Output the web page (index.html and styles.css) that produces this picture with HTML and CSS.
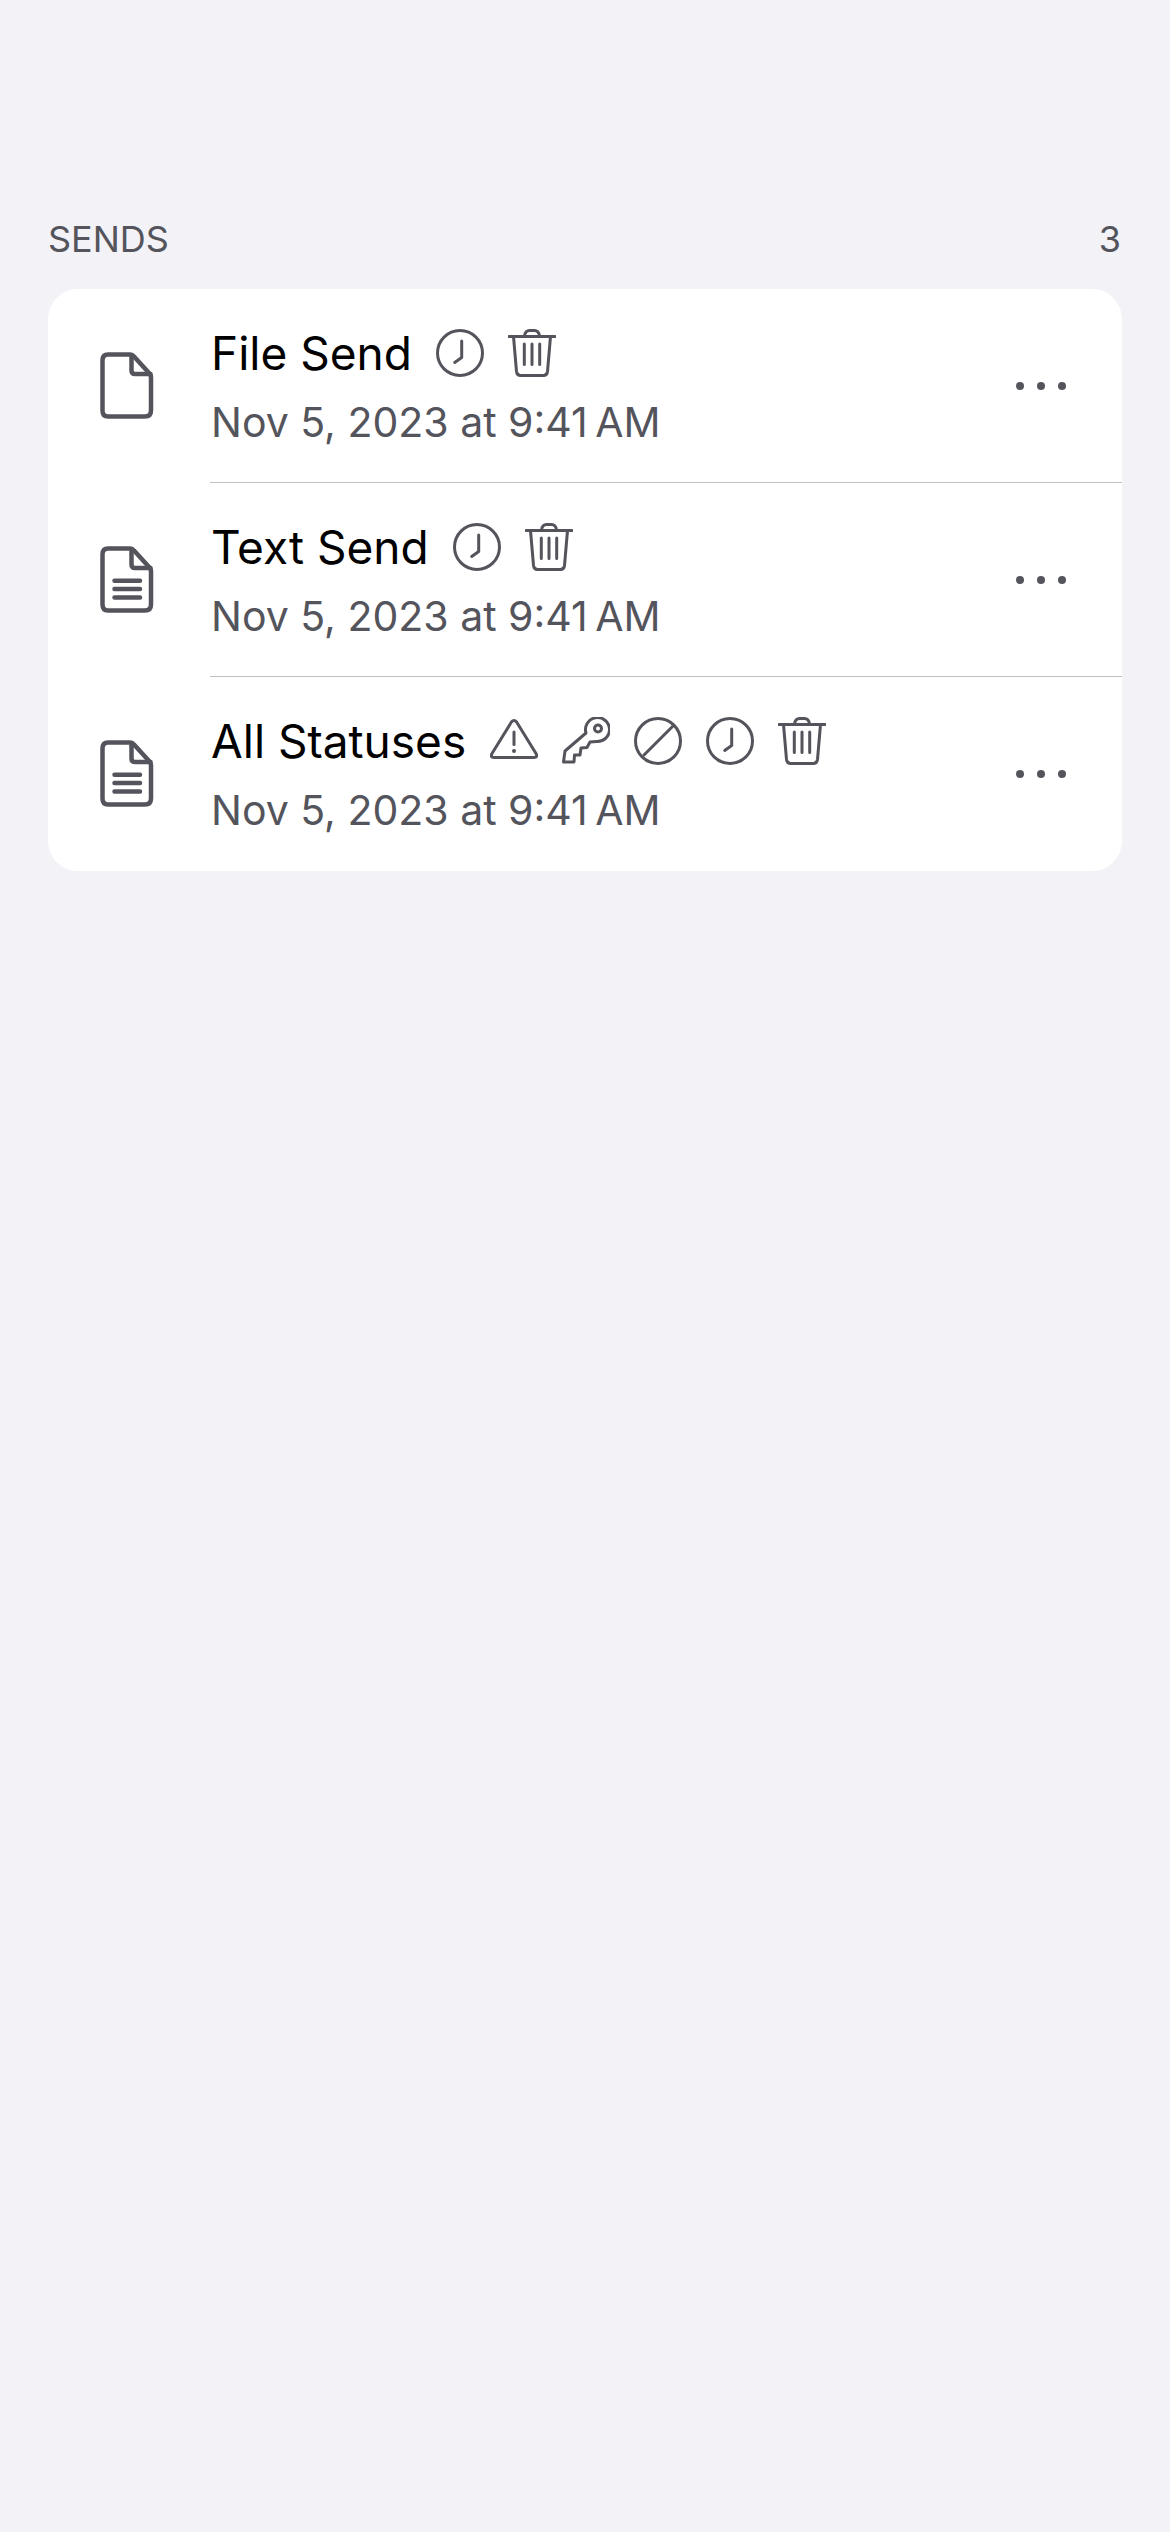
FILE: index.html
```html
<!DOCTYPE html>
<html lang="en">
<head>
<meta charset="utf-8">
<title>Sends</title>
<link rel="stylesheet" href="styles.css">
</head>
<body>
<svg class="defs" width="0" height="0" aria-hidden="true">
  <defs>
    <symbol id="i-clock" viewBox="0 0 48 48"><circle cx="24" cy="24" r="22.5"/><path d="M25.7 12V28.5L18.7 33.5"/></symbol>
    <symbol id="i-trash" viewBox="0 0 48 48"><path d="M1 7.5H47"/><path d="M16.5 7C17 3.5 19 1.5 21.5 1.5H26.5C29 1.5 31 3.5 31.5 7"/><path d="M5.5 7.5L8.5 42.5Q9 46.5 12.5 46.5H35.5Q39 46.5 39.5 42.5L42.5 7.5"/><path d="M16.3 15V35.5M24 15V35.5M31.7 15V35.5"/></symbol>
    <symbol id="i-warn" viewBox="0 0 48 48"><path d="M21.4 5Q24 1.8 26.6 5L46 36.5Q48 40.5 44 40.5H4Q0 40.5 2 36.5Z"/><path d="M24 15V27.5"/><circle class="solid" cx="24" cy="34" r="2"/></symbol>
    <symbol id="i-key" viewBox="0 0 48 48"><path d="M24 16A12 12 0 1 1 34.5 24.5L28 25L25 30.5L19 31L18 38L12.5 38L12 45H1.5L3 34Z"/><circle cx="36" cy="11.5" r="3.5"/></symbol>
    <symbol id="i-ban" viewBox="0 0 48 48"><circle cx="24" cy="24" r="22.5"/><path d="M39 9L10 38"/></symbol>
    <symbol id="i-file" viewBox="0 1 60 72"><path d="M11 5.5H33Q35.5 5.5 37 7.5L52.5 24.5Q54 26.3 54 28.5V61.5Q54 67.5 48 67.5H11Q5.5 67.5 5.5 61.5V11.5Q5.5 5.5 11 5.5Z"/><path d="M34.5 6V21.5Q34.5 25 38 25H53.5"/></symbol>
    <symbol id="i-text" viewBox="0 1 60 72"><path d="M11 5.5H33Q35.5 5.5 37 7.5L52.5 24.5Q54 26.3 54 28.5V61.5Q54 67.5 48 67.5H11Q5.5 67.5 5.5 61.5V11.5Q5.5 5.5 11 5.5Z"/><path d="M34.5 6V21.5Q34.5 25 38 25H53.5"/><path d="M17.5 37.7H43M17.5 46H43M17.5 54.5H43"/></symbol>
  </defs>
</svg>
<main class="page">
  <header class="section-head">
    <span>SENDS</span>
    <span>3</span>
  </header>
  <section class="card">
    <article class="row">
      <svg class="type-icon"><use href="#i-file"/></svg>
      <div class="row-body">
        <div class="row-text">
          <div class="title-line">
            <span class="title">File Send</span>
            <span class="status">
              <svg class="status-icon"><use href="#i-clock"/></svg>
              <svg class="status-icon"><use href="#i-trash"/></svg>
            </span>
          </div>
          <div class="date">Nov 5, 2023 at 9:41&#8239;AM</div>
        </div>
        <div class="more"><i></i><i></i><i></i></div>
      </div>
    </article>
    <article class="row">
      <svg class="type-icon"><use href="#i-text"/></svg>
      <div class="row-body">
        <div class="row-text">
          <div class="title-line">
            <span class="title">Text Send</span>
            <span class="status">
              <svg class="status-icon"><use href="#i-clock"/></svg>
              <svg class="status-icon"><use href="#i-trash"/></svg>
            </span>
          </div>
          <div class="date">Nov 5, 2023 at 9:41&#8239;AM</div>
        </div>
        <div class="more"><i></i><i></i><i></i></div>
      </div>
    </article>
    <article class="row">
      <svg class="type-icon"><use href="#i-text"/></svg>
      <div class="row-body">
        <div class="row-text">
          <div class="title-line">
            <span class="title">All Statuses</span>
            <span class="status">
              <svg class="status-icon"><use href="#i-warn"/></svg>
              <svg class="status-icon"><use href="#i-key"/></svg>
              <svg class="status-icon"><use href="#i-ban"/></svg>
              <svg class="status-icon"><use href="#i-clock"/></svg>
              <svg class="status-icon"><use href="#i-trash"/></svg>
            </span>
          </div>
          <div class="date">Nov 5, 2023 at 9:41&#8239;AM</div>
        </div>
        <div class="more"><i></i><i></i><i></i></div>
      </div>
    </article>
  </section>
</main>
</body>
</html>
```

FILE: styles.css
```css
* { box-sizing: border-box; }
html, body { margin: 0; padding: 0; }
body {
  min-height: 2532px;
  background: #f2f2f7;
  font-family: Inter, "Liberation Sans", sans-serif;
  color: #000;
}
.defs { display: block; height: 0; }
.page { padding: 216px 48px 0; }
.section-head {
  display: flex;
  justify-content: space-between;
  height: 73px;
  padding-right: 1px;
  font-size: 36px;
  line-height: 46px;
  color: #54545c;
}
.card {
  background: #fff;
  border-radius: 30px;
  overflow: hidden;
}
.row {
  display: flex;
  height: 194px;
  align-items: center;
}
.type-icon {
  flex: none;
  width: 60px;
  height: 72px;
  margin-left: 49px;
  margin-right: 53px;
  fill: none;
  stroke: #54545c;
  stroke-width: 4.5;
  stroke-linejoin: round;
  stroke-linecap: round;
}
.row-body {
  flex: 1;
  align-self: stretch;
  display: flex;
  align-items: center;
  justify-content: space-between;
  padding-left: 1px;
  padding-right: 56px;
  border-bottom: 1px solid #c0c0c4;
}
.row:last-child .row-body { border-bottom-color: transparent; }
.row-text { display: flex; flex-direction: column; gap: 21px; padding-top: 3px; }
.title-line { display: flex; align-items: center; gap: 24px; }
.title { font-size: 46px; line-height: 48px; }
.status { display: flex; gap: 24px; }
.status-icon {
  display: block;
  width: 48px;
  height: 48px;
  fill: none;
  stroke: #54545c;
  stroke-width: 3;
  stroke-linecap: round;
  stroke-linejoin: round;
}
.solid { fill: #54545c; stroke: none; }
.date { font-size: 41px; line-height: 48px; color: #54545c; }
.more { display: flex; gap: 13px; }
.more i {
  display: block;
  width: 8px;
  height: 8px;
  border-radius: 50%;
  background: #54545c;
}
```
